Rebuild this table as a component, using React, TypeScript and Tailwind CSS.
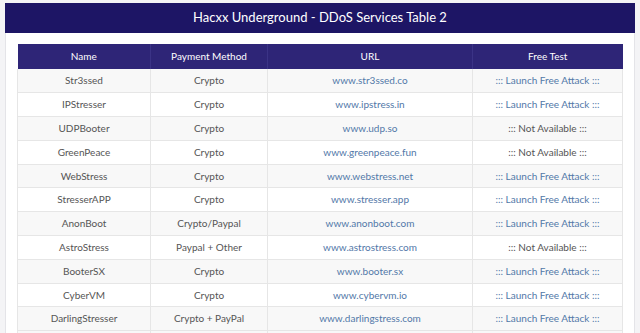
const rows = [
  { name: 'Str3ssed', pay: 'Crypto', url: 'www.str3ssed.co', free: true },
  { name: 'IPStresser', pay: 'Crypto', url: 'www.ipstress.in', free: true },
  { name: 'UDPBooter', pay: 'Crypto', url: 'www.udp.so', free: false },
  { name: 'GreenPeace', pay: 'Crypto', url: 'www.greenpeace.fun', free: false },
  { name: 'WebStress', pay: 'Crypto', url: 'www.webstress.net', free: true },
  { name: 'StresserAPP', pay: 'Crypto', url: 'www.stresser.app', free: true },
  { name: 'AnonBoot', pay: 'Crypto/Paypal', url: 'www.anonboot.com', free: true },
  { name: 'AstroStress', pay: 'Paypal + Other', url: 'www.astrostress.com', free: false },
  { name: 'BooterSX', pay: 'Crypto', url: 'www.booter.sx', free: true },
  { name: 'CyberVM', pay: 'Crypto', url: 'www.cybervm.io', free: true },
  { name: 'DarlingStresser', pay: 'Crypto + PayPal', url: 'www.darlingstress.com', free: true },
];

export default function App() {
  return (
    <div className="h-[333px] overflow-hidden bg-[#f4f4f6] px-[5px] pt-[3px] font-['Lato','Noto_Sans',sans-serif]">
      <div className="h-[30px] bg-[#1d1565] flex items-center justify-center text-white text-[13px]">
        Hacxx Underground - DDoS Services Table 2
      </div>
      <div className="bg-white border-x border-[#e4e4e8] px-[11px] pt-[11px] h-[400px]">
        <table className="w-[606px] border-collapse text-[10px] text-center">
          <thead>
            <tr className="h-[25px] bg-[#2e2577] text-white">
              <th className="w-[133px] font-normal border-r border-[#3b3386]">Name</th>
              <th className="w-[117px] font-normal border-r border-[#3b3386]">Payment Method</th>
              <th className="w-[205px] font-normal border-r border-[#3b3386]">URL</th>
              <th className="font-normal">Free Test</th>
            </tr>
          </thead>
          <tbody>
            {rows.map((r, i) => (
              <tr
                key={r.name}
                className={`h-[23.8px] border-b border-[#e6e6e6] ${i % 2 === 0 ? 'bg-[#f8f8f8]' : 'bg-white'}`}
              >
                <td className="border-x border-[#e6e6e6] text-[#555]">{r.name}</td>
                <td className="border-r border-[#e6e6e6] text-[#555]">{r.pay}</td>
                <td className="border-r border-[#e6e6e6] text-[#5278a8]">{r.url}</td>
                <td className={`border-r border-[#e6e6e6] ${r.free ? 'text-[#5278a8]' : 'text-[#555]'}`}>
                  {r.free ? '::: Launch Free Attack :::' : '::: Not Available :::'}
                </td>
              </tr>
            ))}
            <tr className="h-[23.8px] bg-[#f8f8f8]">
              <td className="border-x border-[#e6e6e6]"></td>
              <td className="border-r border-[#e6e6e6]"></td>
              <td className="border-r border-[#e6e6e6]"></td>
              <td className="border-r border-[#e6e6e6]"></td>
            </tr>
          </tbody>
        </table>
      </div>
    </div>
  );
}
